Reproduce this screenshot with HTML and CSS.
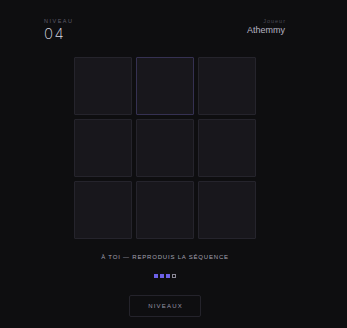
FILE: index.html
```html
<!DOCTYPE html>
<html lang="fr">
<head>
    <meta charset="UTF-8">
    <meta name="viewport" content="width=device-width, initial-scale=1.0">
    <title>Séquence</title>
    <link rel="stylesheet" href="styles.css">
</head>
<body>

    <div class="app">
        <div class="header">
            <div class="level">
                <span class="label">Niveau</span>
                <span class="level-num">04</span>
            </div>
            <div class="player">
                <span class="label label-small">Joueur</span>
                <span class="player-name">Athemmy</span>
            </div>
        </div>

        <div class="board">
            <div class="tile"></div>
            <div class="tile tile-active"></div>
            <div class="tile"></div>
            <div class="tile"></div>
            <div class="tile"></div>
            <div class="tile"></div>
            <div class="tile"></div>
            <div class="tile"></div>
            <div class="tile"></div>
        </div>

        <p class="status">À toi — reproduis la séquence</p>

        <div class="progress">
            <span class="dot done"></span>
            <span class="dot done"></span>
            <span class="dot done"></span>
            <span class="dot"></span>
        </div>

        <button class="levels-btn">Niveaux</button>
    </div>

</body>
</html>
```

FILE: styles.css
```css
/* Reset */
* {
    margin: 0;
    padding: 0;
    box-sizing: border-box;
    font-family: "Liberation Sans", Arial, sans-serif;
}

body {
    background-color: #0e0e10;
    height: 100vh;
}

.app {
    width: 330px;
    display: flex;
    flex-direction: column;
    align-items: center;
}

.header {
    width: 100%;
    display: flex;
    justify-content: space-between;
    align-items: flex-start;
    padding: 18px 45px 0 44px;
}

.level,
.player {
    display: flex;
    flex-direction: column;
}

.player {
    align-items: flex-end;
}

.label {
    font-size: 5.5px;
    letter-spacing: 1.5px;
    text-transform: uppercase;
    color: #5e5d6a;
    line-height: 7px;
}

.label-small {
    text-transform: none;
    letter-spacing: 1px;
    color: #4a4954;
    margin-right: -1px;
}

.level-num {
    font-family: Inter, "Noto Sans", sans-serif;
    font-size: 15px;
    font-weight: 200;
    letter-spacing: 1.5px;
    color: #dcdce4;
    line-height: 15px;
    margin-top: 1px;
}

.player-name {
    font-size: 9px;
    color: #b6b5c2;
    line-height: 10px;
}

.board {
    margin-top: 16px;
    display: grid;
    grid-template-columns: repeat(3, 58px);
    grid-auto-rows: 58px;
    gap: 4px;
}

.tile {
    background: #18171c;
    border: 1px solid #25242c;
    border-radius: 1px;
}

.tile-active {
    border-color: #353152;
}

.status {
    margin-top: 15px;
    font-size: 6px;
    letter-spacing: 0.8px;
    text-transform: uppercase;
    color: #a3a1b1;
    line-height: 7px;
}

.progress {
    margin-top: 13px;
    display: flex;
    gap: 2px;
}

.dot {
    width: 4px;
    height: 4px;
    border: 1px solid #8a8896;
}

.dot.done {
    background: #6c60e6;
    border-color: #6c60e6;
}

.levels-btn {
    margin-top: 17px;
    width: 72px;
    height: 22px;
    background: transparent;
    border: 1px solid #24232b;
    border-radius: 2px;
    color: #9896a6;
    font-size: 6px;
    letter-spacing: 1.2px;
    text-transform: uppercase;
    padding-left: 1px;
    cursor: pointer;
}
```
